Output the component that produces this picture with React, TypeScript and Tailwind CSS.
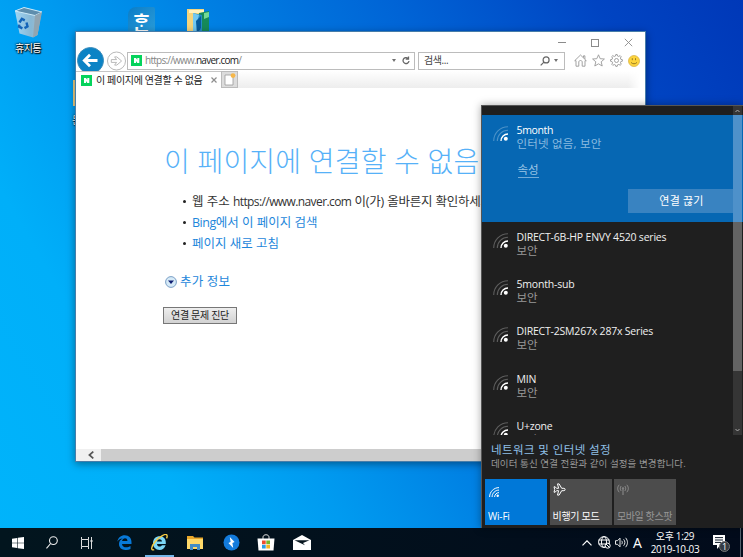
import React from "react";
import clsx from "clsx";

interface Network {
  name: string;
  status: string;
}

const networks: Network[] = [
  { name: "DIRECT-6B-HP ENVY 4520 series", status: "보안" },
  { name: "5month-sub", status: "보안" },
  { name: "DIRECT-2SM267x 287x Series", status: "보안" },
  { name: "MIN", status: "보안" },
  { name: "U+zone", status: "보안" },
];

// ---------- Shared icons ----------

function SignalIcon() {
  return (
    <svg className="h-[15px] w-[15px] shrink-0" viewBox="0 0 15 15" fill="none" stroke="#fff">
      <path d="M.7 15C.7 7.1 7.1.7 15 .7" strokeWidth="1.1" opacity=".28" />
      <path d="M4.3 15C4.3 9.1 9.1 4.3 15 4.3" strokeWidth="1.1" opacity=".28" />
      <path d="M8 15c0-3.9 3.1-7 7-7" strokeWidth="1.4" />
      <circle cx="12.8" cy="12.8" r="2" fill="#fff" stroke="none" />
    </svg>
  );
}

function NaverIcon() {
  return (
    <svg className="h-[11px] w-[11px] shrink-0" viewBox="0 0 11 11">
      <rect width="11" height="11" fill="#05d35c" />
      <path d="M3 3h2l1.3 2V3h2v5h-2L5 6v2H3z" fill="#fff" />
    </svg>
  );
}

// ---------- Desktop ----------

function RecycleBin() {
  return (
    <div className="absolute left-[8px] top-[6px] flex w-10 flex-col items-center">
      <svg className="h-[33px] w-[30px]" viewBox="0 0 30 33">
        <defs>
          <linearGradient id="bin" x1="0" x2="1">
            <stop offset="0" stopColor="#a9d8f4" />
            <stop offset=".6" stopColor="#8db9d4" />
            <stop offset="1" stopColor="#aebfc9" />
          </linearGradient>
        </defs>
        <path d="M2 5l4.5 22.5 13.5 4 4.5-2.5 4-23z" fill="url(#bin)" opacity=".95" />
        <path d="M2 5L11 1.5 29 6l-7 3.5z" fill="#5e8ead" stroke="#cdebfa" strokeWidth="1" />
        <path d="M22 9.5L20 31.5l4.5-2.5L29 6z" fill="#91a5b1" />
        <g fill="none" stroke="#1464b8" strokeWidth="2.4">
          <path d="M6.5 16.5l2.4-3.6 2.9 1.4" />
          <path d="M13.5 16.5l1 4-3 1.6" />
          <path d="M9.4 22.3l-3.3-1.6.2-2" />
        </g>
      </svg>
      <span className="mt-[2px] text-[10px] leading-[15px] tracking-[-0.6px] text-white [text-shadow:1px_1px_1px_#000,0_0_2px_#000,0_0_2px_#000]">
        휴지통
      </span>
    </div>
  );
}

function HangulShortcut() {
  return (
    <div className="absolute left-[128px] top-[7px] h-[27px] w-[27px] rounded-tl-[8px] rounded-tr-[2px] bg-gradient-to-br from-[#097dc7] to-[#2a9dda] text-center">
      <span className="text-[19px] leading-[32px] font-bold text-white">ᄒᆞᆫ</span>
      <span className="absolute -left-[3px] top-[24px] h-[6px] w-[9px] border border-gray-500 bg-gray-200" />
    </div>
  );
}

function FolderShortcut() {
  return (
    <svg className="absolute left-[186px] top-[8px] h-[28px] w-[24px]" viewBox="0 0 24 28">
      <path d="M1 1h17v27H1z" fill="#f5d57d" />
      <path d="M3 2h15v3H3z" fill="#fff1bd" />
      <path d="M13 5l10-2v25H12z" fill="#168a59" />
      <path d="M18 5l5-1v5l-5 2z" fill="#73d895" />
      <path d="M7 5l9 2v21H7z" fill="#238dc7" />
      <path d="M7 5l6 2-2 8 4 4-3 7-5-2z" fill="#72c8f0" />
      <path d="M10 13l5-5v12l-4 7z" fill="#075b9d" />
    </svg>
  );
}

// ---------- Browser window ----------

function WindowControls() {
  return (
    <div className="flex h-[20px] items-center justify-end gap-[25px] pr-[12px] pt-px text-[#8b8b8b]">
      <span className="h-px w-[8px] bg-[#8b8b8b]" />
      <span className="h-[8px] w-[8px] border border-[#8b8b8b]" />
      <svg className="h-[9px] w-[9px]" viewBox="0 0 9 9" stroke="currentColor" strokeWidth=".9">
        <path d="M.8.8l7.4 7.4M8.2.8L.8 8.2" />
      </svg>
    </div>
  );
}

function NavButtons() {
  return (
    <>
      <svg className="-my-1 h-[27px] w-[27px] shrink-0" viewBox="0 0 27 27" fill="none">
        <circle cx="13.5" cy="13.5" r="13" fill="#0b83c5" stroke="#3c8cba" />
        <path d="M20.5 13.5H7.8M13 7.8l-5.7 5.7 5.7 5.7" stroke="#fff" strokeWidth="2.8" />
      </svg>
      <svg className="ml-[3px] h-[20px] w-[19px] shrink-0" viewBox="0 0 19 20" fill="none" stroke="#b9b9b9">
        <circle cx="9.5" cy="10" r="9" />
        <path d="M4.3 8.6h5.3l-2-2.7h2.2L14.6 10l-4.8 4.1H7.6l2-2.7H4.3z" />
      </svg>
    </>
  );
}

function Caret() {
  return <span className="border-x-[2.5px] border-t-[3px] border-x-transparent border-t-[#707070]" />;
}

function ToolbarIcons() {
  return (
    <div className="ml-[9px] flex items-center gap-[5px]">
      <svg className="h-[13px] w-[13px]" viewBox="0 0 13 13" fill="none" stroke="#999" strokeWidth=".9">
        <path d="M.7 6.7L6.5 1l5.8 5.7H11v5.5H8.2V8c0-2-3.4-2-3.4 0v4.2H2V6.7zM9.5 3.6V1.8h1.4V5" />
      </svg>
      <svg className="h-[13px] w-[13px]" viewBox="0 0 13 13" fill="none" stroke="#999" strokeWidth=".9">
        <path d="M6.5.8l1.7 3.9 4.2.3-3.2 2.8 1 4.2-3.7-2.2L2.8 12l1-4.2L.6 5l4.2-.3z" />
      </svg>
      <svg className="h-[13px] w-[13px]" viewBox="0 0 13 13" fill="none" stroke="#999" strokeWidth=".9">
        <path d="M5.5 2l.3-1.5h1.4L7.5 2l1.3.5 1.3-.9 1.1 1.1-.8 1.3.5 1.4 1.5.3v1.5l-1.5.3-.5 1.3.9 1.4-1.1 1-1.4-.8-1.3.5-.3 1.5H5.8L5.5 11l-1.3-.5-1.4.8-1-1 .8-1.4L2 7.5.5 7.2V5.7L2 5.4 2.6 4l-.9-1.3 1.1-1.1 1.4.9z" />
        <circle cx="6.5" cy="6.5" r="2" />
      </svg>
      <svg className="h-[12px] w-[12px]" viewBox="0 0 12 12" fill="none">
        <circle cx="6" cy="6" r="5.5" fill="#fdd43c" stroke="#d9b54a" strokeWidth=".8" />
        <path d="M4.3 3.2v2M7.5 3.2v2M3 7.4c1.3 1.8 4.7 1.8 6 0" stroke="#8f7420" strokeWidth=".9" />
      </svg>
    </div>
  );
}

function AddressRow() {
  return (
    <div className="flex h-[17px] items-center pl-px">
      <NavButtons />
      <div className="ml-[1px] flex h-[18px] w-[288px] shrink-0 items-center border border-[#bcbcbc] pl-[3px] pr-[4px]">
        <NaverIcon />
        <span className="ml-[3px] flex-1 text-[10px] tracking-[-0.75px] text-[#858585]">
          https://www.<span className="text-[#222]">naver.com</span>/
        </span>
        <Caret />
        <svg className="ml-[6px] h-[9px] w-[8px]" viewBox="0 0 8 9" fill="none" stroke="#666" strokeWidth="1.3">
          <path d="M6 2.3A3 3 0 1 0 7 5M6.5.4v2.8H3.7" />
        </svg>
      </div>
      <div className="ml-[3px] flex h-[18px] w-[147px] shrink-0 items-center border border-[#bcbcbc] pl-[5px] pr-[6px]">
        <span className="flex-1 text-[10px] tracking-[-0.4px] text-[#444]">검색...</span>
        <svg className="h-[10px] w-[10px]" viewBox="0 0 10 10" fill="none" stroke="#666" strokeWidth="1.2">
          <circle cx="6.1" cy="3.9" r="3" />
          <path d="M3.9 6.1L.7 9.3" />
        </svg>
        <span className="ml-[4px] flex">
          <Caret />
        </span>
      </div>
      <ToolbarIcons />
    </div>
  );
}

function TabRow() {
  return (
    <div className="mt-[2px] flex h-[17px] pr-[5px]">
      <div className="z-10 flex w-[145px] items-center border-t border-[#c6c6c6] bg-white pl-[5px] pr-[4px]">
        <NaverIcon />
        <span className="ml-[4px] flex-1 whitespace-nowrap text-[10px] leading-none tracking-[-0.35px] text-[#222]">
          이 페이지에 연결할 수 없음
        </span>
        <svg className="h-[6px] w-[6px]" viewBox="0 0 6 6" stroke="#8d8d8d" strokeWidth="1.2">
          <path d="M.5.5l5 5M5.5.5l-5 5" />
        </svg>
      </div>
      <div className="flex w-[17px] items-center justify-center border border-[#bbb] bg-[#dcdcdc]">
        <svg className="h-[13px] w-[12px]" viewBox="0 0 12 13">
          <path d="M1 2h8v10H1z" fill="#fff" stroke="#9b9b9b" strokeWidth=".8" />
          <circle cx="9" cy="2.6" r="2.4" fill="#f6b74a" />
        </svg>
      </div>
      <div className="flex-1 bg-gradient-to-b from-white to-[#ededed] [mask-image:linear-gradient(to_left,transparent,black_12px)]" />
    </div>
  );
}

function ErrorPage() {
  return (
    <div className="flex-1 overflow-hidden whitespace-nowrap pl-[88px] pt-[53px]">
      <h1 className="text-[28px] leading-[40px] font-light tracking-[0.2px] text-[#56b1f8]">
        이 페이지에 연결할 수 없음
      </h1>
      <ul className="mt-[10px] pl-[28px] text-[12.5px] leading-[21.2px] text-[#1e87db]">
        <li className="relative text-[#333] before:absolute before:-left-[9px] before:top-[9px] before:h-[3px] before:w-[3px] before:rounded-full before:bg-[#222]">
          웹 주소 <span className="text-[12px] tracking-[-0.6px]">https://www.naver.com</span>{" "}
          <span className="tracking-[-0.2px]">이(가) 올바른지 확인하세요.</span>
        </li>
        <li className="relative before:absolute before:-left-[9px] before:top-[9px] before:h-[3px] before:w-[3px] before:rounded-full before:bg-[#222]">
          <span className="tracking-[-0.5px]">Bing</span>에서 이 페이지 검색
        </li>
        <li className="relative before:absolute before:-left-[9px] before:top-[9px] before:h-[3px] before:w-[3px] before:rounded-full before:bg-[#222]">
          페이지 새로 고침
        </li>
      </ul>
      <div className="mt-[17px] flex h-[21px] items-center gap-[3px] pl-px text-[12.5px] tracking-[0.2px] text-[#1e87db]">
        <svg className="h-[12px] w-[12px]" viewBox="0 0 12 12">
          <circle cx="6" cy="6" r="5.4" fill="#d6eaf7" stroke="#7b9fc6" />
          <path d="M3 4.6h6L6 8z" fill="#0e1e72" />
        </svg>
        추가 정보
      </div>
      <button className="-ml-px mt-[14px] block h-[17px] w-[74px] border border-[#777] bg-gradient-to-b from-[#eee] to-[#d2d2d2] text-[10px] leading-[14px] tracking-[-0.3px] text-[#222]">
        연결 문제 진단
      </button>
    </div>
  );
}

function BrowserWindow() {
  return (
    <div className="absolute left-[75px] top-[31px] flex h-[431px] w-[571px] flex-col border border-[#477da9] bg-white shadow-[0_2px_8px_rgba(0,0,0,0.4)]">
      <WindowControls />
      <AddressRow />
      <TabRow />
      <ErrorPage />
      <div className="flex h-[12px] bg-[#cdcdcd]">
        <div className="flex w-[25px] items-center bg-[#f0f0f0] pl-[12px]">
          <svg className="h-[8px] w-[6px]" viewBox="0 0 6 8" fill="none" stroke="#555" strokeWidth="1.7">
            <path d="M5.3.6L1.4 4l3.9 3.4" />
          </svg>
        </div>
      </div>
    </div>
  );
}

// ---------- Network flyout ----------

function NetworkRow({ name, status }: Network) {
  return (
    <div className="flex h-[47.2px] shrink-0 gap-[9px] pl-[10.5px] pt-[9px]">
      <span className="pt-[2px]">
        <SignalIcon />
      </span>
      <div className="whitespace-nowrap">
        <p className="text-[10.5px] leading-[13px] tracking-[-0.2px] text-[#f0f0f0]">{name}</p>
        <p className="text-[11.5px] leading-[13px] text-[#999]">{status}</p>
      </div>
    </div>
  );
}

function ConnectedNetwork() {
  return (
    <div className="flex h-[107px] shrink-0 gap-[9px] bg-[#0667b3] pl-[10.5px] pt-[9px]">
      <span className="pt-[2px]">
        <SignalIcon />
      </span>
      <div className="flex flex-1 flex-col">
        <p className="text-[10.5px] leading-[13px] tracking-[-0.35px] text-white">5month</p>
        <p className="text-[11.5px] leading-[13px] tracking-[0.2px] text-[#8bbbe0]">인터넷 없음, 보안</p>
        <p className="ml-[1px] mt-[13px] self-start border-b border-[#72abd8] text-[11.5px] leading-[14px] text-[#9bc5e5]">속성</p>
        <button className="mr-[8px] mt-[11px] h-[24px] w-[107px] self-end bg-[#3983c1] text-[11px] tracking-[0.2px] text-white">
          연결 끊기
        </button>
      </div>
    </div>
  );
}

function FlyoutScrollbar() {
  return (
    <div className="absolute right-px top-0 flex h-[329px] w-[9px] flex-col items-center bg-[#353535]">
      <svg className="h-[9px] w-[5px]" viewBox="0 0 5 9" fill="none" stroke="#aaa">
        <path d="M.5 6l2-2 2 2" />
      </svg>
      <div className="h-[107px] w-full bg-[#4e91ca]" />
      <div className="h-[149px] w-full bg-[#636363]" />
      <svg className="mt-auto h-[9px] w-[5px]" viewBox="0 0 5 9" fill="none" stroke="#aaa">
        <path d="M.5 3l2 2 2-2" />
      </svg>
    </div>
  );
}

interface TileProps {
  label: string;
  className: string;
  children: React.ReactNode;
}

function QuickTile({ label, className, children }: TileProps) {
  return (
    <button className={clsx("flex h-[46px] w-[62px] flex-col items-start justify-between whitespace-nowrap pb-[2px] pl-[3px] pt-[4px] text-[10px]", className)}>
      {children}
      <span className="leading-[13px]">{label}</span>
    </button>
  );
}

function NetworkFlyout() {
  return (
    <div className="absolute left-[481px] top-[105px] flex h-[423px] w-[262px] flex-col border-l border-t border-[#555] bg-[#1f1f1f] shadow-[0_0_8px_rgba(0,0,0,0.35)]">
      <div className="flex h-[329px] flex-col overflow-hidden pt-[9px]">
        <ConnectedNetwork />
        {networks.map((network) => (
          <NetworkRow key={network.name} {...network} />
        ))}
      </div>
      <FlyoutScrollbar />
      <div className="whitespace-nowrap pl-[9px] pt-[7px]">
        <p className="text-[11.5px] leading-[15px] tracking-[0.4px] text-[#8fc0e7]">네트워크 및 인터넷 설정</p>
        <p className="text-[9.5px] leading-[14px] tracking-[0.1px] text-[#999]">데이터 통신 연결 전환과 같이 설정을 변경합니다.</p>
      </div>
      <div className="mt-[8px] flex gap-[2.5px] pl-[3px]">
        <QuickTile label="Wi-Fi" className="bg-[#0078d8] tracking-[-0.2px] text-white">
          <svg className="ml-[1px] mt-[4px] h-[10px] w-[10px]" viewBox="0 0 10 10" fill="none" stroke="#fff">
            <path d="M.6 10C.6 4.8 4.8.6 10 .6M3.1 10c0-3.8 3.1-6.9 6.9-6.9M5.6 10c0-2.4 2-4.4 4.4-4.4" />
            <circle cx="8.7" cy="8.7" r="1.2" fill="#fff" stroke="none" />
          </svg>
        </QuickTile>
        <QuickTile label="비행기 모드" className="bg-[#4c4c4c] tracking-[-0.3px] text-white">
          <svg className="h-[13px] w-[13px]" viewBox="0 0 13 13" fill="none" stroke="#fff" strokeWidth="1">
            <path d="M1 3.8h1.2l1.3 1.5h2.1L4.5.9h1.6l2.6 4.4h2.2c1.6 0 1.6 2.4 0 2.4H8.7l-2.6 4.4H4.5l1.1-4.4H3.5L2.2 9.2H1l.7-2.7z" />
          </svg>
        </QuickTile>
        <QuickTile label="모바일 핫스팟" className="bg-[#4c4c4c] tracking-[-0.4px] text-[#969696]">
          <svg className="mt-px h-[11px] w-[12px]" viewBox="0 0 12 11" fill="none" stroke="currentColor" strokeWidth=".9">
            <path d="M2.2.8C.2 3.2.2 5.8 2.2 8.2M4.1 2.1C3 3.7 3 5.3 4.1 6.9M9.8.8c2 2.4 2 5 0 7.4M7.9 2.1C9 3.7 9 5.3 7.9 6.9M6 5v6" />
            <circle cx="6" cy="4.3" r=".7" />
          </svg>
        </QuickTile>
      </div>
    </div>
  );
}

// ---------- Taskbar ----------

function TaskbarApps() {
  return (
    <div className="flex h-full items-center">
      <span className="flex w-[35px] justify-center">
        <svg className="h-[12px] w-[12px]" viewBox="0 0 12 12" fill="#fff">
          <path d="M0 1.7l5.2-.8v4.8H0zM5.8.8L12 0v5.7H5.8zM0 6.3h5.2v4.8L0 10.3zM5.8 6.3H12V12l-6.2-.8z" />
        </svg>
      </span>
      <span className="flex w-[34px] justify-center">
        <svg className="h-[13px] w-[12px]" viewBox="0 0 12 13" fill="none" stroke="#eee" strokeWidth="1.1">
          <circle cx="7.4" cy="4.6" r="3.9" />
          <path d="M4.6 7.5L.5 12.3" />
        </svg>
      </span>
      <span className="flex w-[36px] justify-center">
        <svg className="h-[12px] w-[12px]" viewBox="0 0 12 12" fill="none" stroke="#ddd">
          <path d="M.5 0v2.5h7V0M.5 12V9.5h7V12M.5 2.5v7M7.5 2.5v7M10.5 0v12" />
          <path d="M9.5 4h2" strokeWidth="2" />
        </svg>
      </span>
      <span className="flex w-[39px] justify-center">
        <svg className="h-[15px] w-[15px]" viewBox="0 0 15 15" fill="#0879d8">
          <path d="M.3 6.7C1.1 2.4 4 .2 7.7.2c4.5 0 6.8 3.2 6.8 7v1.7H5c.2 3.8 5.4 4.1 8.5 2.1v3C9 16.1 2 15.2 2 9c0-2.7 1.5-4.4 3.7-5.4C2.8 3.8 1.3 5 .3 6.7zm4.8-.8h5.3c.2-3.6-4.7-3.5-5.3 0z" />
        </svg>
      </span>
      <span className="ml-px flex h-full w-[29px] items-center justify-center border-b-[2px] border-[#75b5e8] pt-[2px]">
        <svg className="h-[17px] w-[17px]" viewBox="0 0 17 17">
          <path d="M2 9C2 4.8 4.8 2.2 8.7 2.2c4.1 0 6.6 3 6.1 7.7H6c.3 3.1 3.8 3.4 5 1.3h3.6c-1 3.2-3.2 4.7-6 4.7C4.7 15.9 2 13.3 2 9zm4-1.5h5C10.6 4.4 6.4 4.4 6 7.5z" fill="#7bd7f7" />
          <path d="M3.2 15.6C-.6 17 .1 12.5 4.3 7.5 8.8 2.2 14.8-.9 15.9 1.1c.5.9.2 2.1-.4 3.2" fill="none" stroke="#f4ca43" strokeWidth="1.4" />
        </svg>
      </span>
      <span className="flex w-[42px] justify-center">
        <svg className="h-[14px] w-[16px]" viewBox="0 0 16 14">
          <path d="M0 0h6l1.5 1.5H16V13H0z" fill="#e9a72a" />
          <path d="M0 3h16v10H0z" fill="#ffd969" />
          <path d="M3 8h10v6h-3v-3H6v3H3z" fill="#438dc6" />
        </svg>
      </span>
      <span className="flex w-[30px] justify-center">
        <svg className="h-[17px] w-[17px]" viewBox="0 0 17 17">
          <circle cx="8.5" cy="8.5" r="8" fill="#137bdc" />
          <path d="M6.8 3l4.8 5.1-2.2.9.8 4.9-4.8-5 2.2-1z" fill="#fff" />
        </svg>
      </span>
      <span className="flex w-[40px] justify-center">
        <svg className="h-[17px] w-[18px]" viewBox="0 0 18 17">
          <path d="M6 5V3c0-3 6-3 6 0v2" fill="none" stroke="#ddd" />
          <path d="M.5 4.5h17L16.5 16.5h-15z" fill="#fff" />
          <path d="M5 6.5h3.7v3.7H5z" fill="#ee4d2d" />
          <path d="M9.3 6.5H13v3.7H9.3z" fill="#78b72a" />
          <path d="M5 10.8h3.7v3.7H5z" fill="#2b9de5" />
          <path d="M9.3 10.8H13v3.7H9.3z" fill="#f6b623" />
        </svg>
      </span>
      <span className="flex w-[32px] justify-center">
        <svg className="h-[15px] w-[18px]" viewBox="0 0 18 15">
          <path d="M0 5l9-5 9 5v10H0z" fill="#fff" />
          <path d="M1.5 5.3h15L10 8l2 2.2z" fill="#06151e" />
        </svg>
      </span>
    </div>
  );
}

function Tray() {
  return (
    <div className="flex h-full items-center pr-[2px] text-white">
      <svg className="h-[6px] w-[10px]" viewBox="0 0 10 6" fill="none" stroke="currentColor" strokeWidth="1.2">
        <path d="M.5 5.3L5 .8l4.5 4.5" />
      </svg>
      <svg className="ml-[6px] h-[13px] w-[13px]" viewBox="0 0 13 13" fill="none" stroke="currentColor">
        <circle cx="6" cy="6" r="5.4" />
        <ellipse cx="6" cy="6" rx="2.5" ry="5.4" />
        <path d="M.6 4h10.8M.6 8h10.8" />
        <circle cx="9.7" cy="9.7" r="2.5" fill="#020e1c" />
        <path d="M8 8l3.4 3.4" />
      </svg>
      <svg className="ml-[4px] h-[11px] w-[13px]" viewBox="0 0 13 11" fill="none" stroke="currentColor" strokeWidth=".9">
        <path d="M.5 3.7h2L5 1.2v8.6L2.5 7.3h-2zM6.7 3.8c.8 1.1.8 2.3 0 3.4M8.6 2.3c1.7 2 1.7 4.4 0 6.4M10.6.8c2.5 3 2.5 6.4 0 9.4" />
      </svg>
      <span className="ml-[5px] w-[10px] text-[14px] leading-none">A</span>
      <div className="ml-[6px] w-[52px] whitespace-nowrap text-center text-[10px] leading-[13px] tracking-[-0.35px]">
        <p>오후 1:29</p>
        <p>2019-10-03</p>
      </div>
      <div className="relative ml-[12px] h-[16px] w-[18px]">
        <svg className="h-[15px] w-[13px]" viewBox="0 0 13 15">
          <path d="M0 0h12v10H7.5L4 14v-4H0z" fill="#fff" />
          <path d="M2 2.6h8M2 5h8M2 7.4h6" stroke="#101c2a" />
        </svg>
        <span className="absolute left-[6px] top-[6px] flex h-[11px] w-[11px] items-center justify-center rounded-full border border-[#777] bg-[#343b43] text-[9px] leading-none">
          1
        </span>
      </div>
      <span className="ml-[9px] h-full w-px bg-[#53606c]" />
    </div>
  );
}

export default function App() {
  return (
    <div
      lang="ko"
      className="relative flex h-[557px] w-[743px] flex-col overflow-hidden bg-[linear-gradient(60deg,#00b4fb_0%,#00aff9_20%,#009bf0_34%,#0080e3_49%,#0064d6_67%,#0044c2_86%,#0038b8_100%)] font-['Open_Sans','Noto_Sans_CJK_KR',sans-serif]"
    >
      <div className="relative flex-1">
        <RecycleBin />
        <HangulShortcut />
        <FolderShortcut />
        <div className="absolute left-[73px] top-[80px] h-[26px] w-[10px] bg-[#edcf83]" />
        <span className="absolute left-[72px] top-[113px] text-[10px] leading-[15px] text-white [text-shadow:1px_1px_1px_#000,0_0_2px_#000]">
          문
        </span>
        <BrowserWindow />
        <NetworkFlyout />
      </div>
      <footer className="flex h-[29px] items-center justify-between bg-gradient-to-r from-[#02151e] to-[#020b1b]">
        <TaskbarApps />
        <Tray />
      </footer>
    </div>
  );
}
